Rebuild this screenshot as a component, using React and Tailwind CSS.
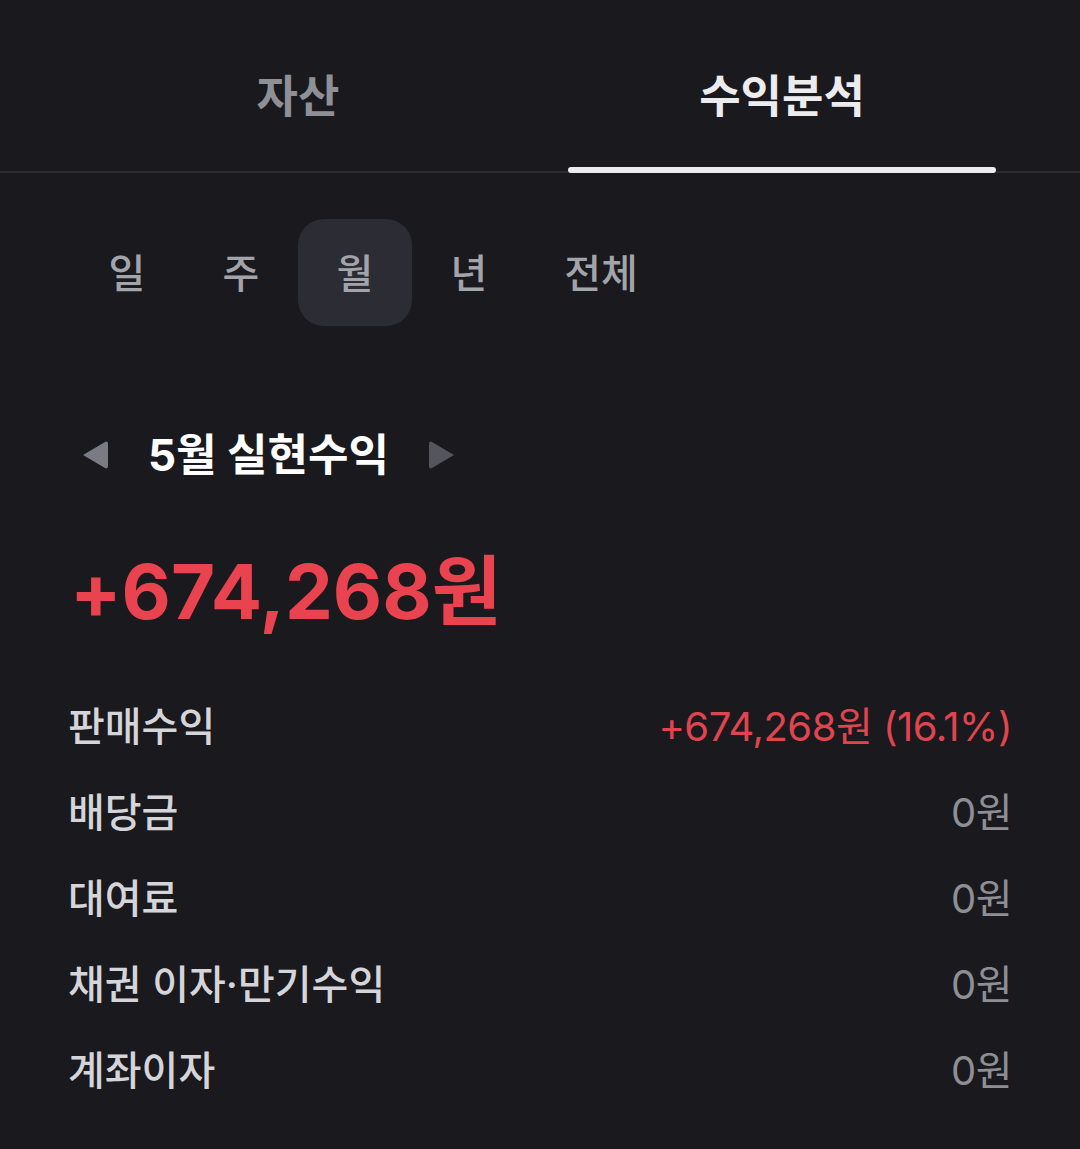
import { useState } from 'react'

const font = { fontFamily: 'Inter, "Noto Sans CJK KR", sans-serif' }

const periods = ['일', '주', '월', '년', '전체']

const rows = [
  { label: '판매수익', value: '+674,268원 (16.1%)', red: true },
  { label: '배당금', value: '0원' },
  { label: '대여료', value: '0원' },
  { label: '채권 이자·만기수익', value: '0원' },
  { label: '계좌이자', value: '0원' },
]

const Triangle = ({ dir, className }) => (
  <svg viewBox="0 0 30 34" className={className}>
    {dir === 'left' ? (
      <path d="M3 17 L25 4 Q28 2.5 28 6 L28 28 Q28 31.5 25 30 Z" fill="currentColor" />
    ) : (
      <path d="M27 17 L5 4 Q2 2.5 2 6 L2 28 Q2 31.5 5 30 Z" fill="currentColor" />
    )}
  </svg>
)

export default function App() {
  const [tab, setTab] = useState(1)
  const [period, setPeriod] = useState(2)

  return (
    <div className="min-h-[1149px] w-[1080px] bg-[#19191e]" style={font}>
      {/* top tabs */}
      <div className="flex gap-[56px] border-b-2 border-[#2a2a30] px-[84px]">
        {['자산', '수익분석'].map((t, i) => (
          <button
            key={t}
            onClick={() => setTab(i)}
            className={`relative flex h-[171px] flex-1 items-center justify-center pt-[22px] text-[45px] font-bold ${
              tab === i ? 'text-[#ececef]' : 'text-[#8f8f96]'
            }`}
          >
            {t}
            {tab === i && (
              <span className="absolute -bottom-[2px] left-0 right-0 h-[6px] rounded-full bg-[#ececef]" />
            )}
          </button>
        ))}
      </div>

      {/* period selector */}
      <div className="mt-[46px] flex px-[70px]">
        {periods.map((p, i) => (
          <button
            key={p}
            onClick={() => setPeriod(i)}
            className={`flex h-[107px] items-center justify-center rounded-[26px] pt-[2px] text-[40px] font-medium text-[#a3a3aa] ${
              p.length > 1 ? 'w-[150px]' : 'w-[114px]'
            } ${period === i ? 'bg-[#2c2c34]' : ''}`}
          >
            {p}
          </button>
        ))}
      </div>

      {/* month header */}
      <div className="mt-[107px] flex items-center px-[80px]">
        <Triangle dir="left" className="h-[34px] w-[30px] text-[#7b7b83]" />
        <div className="ml-[38px] mr-[38px] text-[44px] font-bold leading-none text-white">5월 실현수익</div>
        <Triangle dir="right" className="h-[34px] w-[30px] text-[#55555e]" />
      </div>

      {/* total */}
      <div className="mt-[76px] px-[70px] text-[76px] font-bold leading-none text-[#e8434f]">
        +674,268원
      </div>

      {/* breakdown */}
      <div className="mt-[55px] flex flex-col px-[68px]">
        {rows.map((r) => (
          <div key={r.label} className="flex h-[86px] items-center justify-between">
            <span className="text-[40px] font-medium text-[#d4d4d9]">{r.label}</span>
            <span
              className={`text-[40px] tracking-[-0.5px] ${r.red ? 'text-[#e0454f]' : 'text-[#8e8e95]'}`}
            >
              {r.value}
            </span>
          </div>
        ))}
      </div>
    </div>
  )
}
